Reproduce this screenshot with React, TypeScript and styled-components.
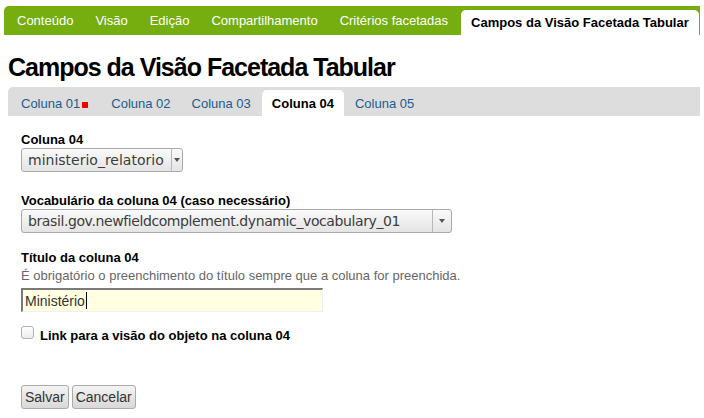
import React from "react";
import styled, { createGlobalStyle } from "styled-components";

const Global = createGlobalStyle`
  html, body { margin: 0; padding: 0; background: #fff; }
  body { font-family: "Liberation Sans", Arial, sans-serif; font-size: 13px; color: #000; }
`;

const Page = styled.div`
  padding: 6px 4px 0 4px;
`;

const Nav = styled.nav`
  display: flex;
  align-items: flex-end;
  height: 29px;
  background: #76ad0f;
  border-radius: 5px 0 0 0;
  padding-left: 4px;
`;

const NavItem = styled.a<{ $active?: boolean }>`
  display: flex;
  align-items: center;
  height: ${(p) => (p.$active ? "25px" : "29px")};
  padding: 0 ${(p) => (p.$active ? "10px" : "9px")};
  margin-right: 4px;
  color: ${(p) => (p.$active ? "#000" : "#fff")};
  background: ${(p) => (p.$active ? "#fff" : "transparent")};
  font-weight: ${(p) => (p.$active ? "bold" : "normal")};
  border-radius: ${(p) => (p.$active ? "5px 5px 0 0" : "0")};
  font-size: 13px;
  text-decoration: none;
  white-space: nowrap;
`;

const Content = styled.div`
  padding: 0 0 0 4px;
`;

const Title = styled.h1`
  margin: 17px 0 0 0;
  font-size: 25px;
  line-height: 30px;
  font-weight: bold;
  letter-spacing: -1px;
`;

const SubTabs = styled.div`
  display: flex;
  align-items: flex-end;
  margin-top: 5px;
  height: 29px;
  background: #dddddd;
  border-radius: 5px 0 0 0;
  padding-left: 3px;
`;

const SubTab = styled.a<{ $active?: boolean }>`
  display: flex;
  align-items: center;
  height: ${(p) => (p.$active ? "26px" : "29px")};
  padding: 0 10px;
  margin-right: 1px;
  padding-top: ${(p) => (p.$active ? "0" : "3px")};
  box-sizing: border-box;
  color: ${(p) => (p.$active ? "#000" : "#205c90")};
  background: ${(p) => (p.$active ? "#fff" : "transparent")};
  font-weight: ${(p) => (p.$active ? "bold" : "normal")};
  border-radius: 5px 5px 0 0;
  font-size: 13px;
  white-space: nowrap;
`;

const RequiredMark = styled.span`
  display: inline-block;
  width: 6px;
  height: 6px;
  background: #ee0000;
  margin: 3px 2px 0 2px;
`;

const Form = styled.form`
  padding: 0 0 0 13px;
  display: flex;
  flex-direction: column;
`;

const Field = styled.div<{ $mt: number }>`
  margin-top: ${(p) => p.$mt}px;
  display: flex;
  flex-direction: column;
  align-items: flex-start;
`;

const Label = styled.label`
  font-weight: bold;
  font-size: 13px;
  line-height: 15px;
`;

const Help = styled.div`
  color: #666;
  font-size: 13px;
  line-height: 15px;
  margin-top: 3px;
`;

const SelectBox = styled.div<{ $w: number }>`
  margin-top: 1px;
  width: ${(p) => p.$w}px;
  height: 24px;
  box-sizing: border-box;
  display: flex;
  align-items: stretch;
  border: 1px solid #a9a9a9;
  border-radius: 3px;
  background: linear-gradient(#fafafa, #e4e4e4);
  font-family: "DejaVu Sans", "Noto Sans", sans-serif;
  font-size: 14px;
  color: #3c3c3c;
  overflow: hidden;
`;

const SelectValue = styled.span<{ $spacing: number }>`
  flex: 1;
  display: flex;
  align-items: center;
  padding-left: 6px;
  white-space: nowrap;
  overflow: hidden;
  letter-spacing: ${(p) => p.$spacing}px;
`;

const SelectArrow = styled.span<{ $w: number }>`
  width: ${(p) => p.$w}px;
  flex: none;
  border-left: 1px solid #b8b8b8;
  display: flex;
  align-items: center;
  justify-content: center;
  &::after {
    content: "";
    border-left: 3px solid transparent;
    border-right: 3px solid transparent;
    border-top: 4px solid #555;
  }
`;

const TextInput = styled.div`
  margin-top: 5px;
  width: 302px;
  height: 24px;
  box-sizing: border-box;
  background: #ffffe1;
  border-top: 2px solid #7a7a7a;
  border-left: 2px solid #7a7a7a;
  border-right: 1px solid #f0f0f0;
  border-bottom: 1px solid #f0f0f0;
  display: flex;
  align-items: center;
  padding-left: 2px;
  font-size: 14px;
  color: #333;
`;

const Caret = styled.span`
  display: inline-block;
  width: 1px;
  height: 17px;
  background: #000;
  margin-left: 1px;
`;

const CheckRow = styled.div`
  margin-top: 14px;
  display: flex;
  align-items: flex-start;
  gap: 6px;
`;

const CheckBox = styled.span`
  width: 13px;
  height: 13px;
  box-sizing: border-box;
  border: 1px solid #b0b0b0;
  border-radius: 3px;
  background: linear-gradient(#fff, #ececec);
`;

const CheckLabel = styled.span`
  font-weight: bold;
  font-size: 13px;
  line-height: 15px;
  margin-top: 2px;
`;

const Buttons = styled.div`
  margin-top: 42px;
  display: flex;
  gap: 3px;
`;

const Button = styled.button`
  height: 24px;
  padding: 0 3px;
  border: 1px solid #aaa;
  border-radius: 3px;
  background: linear-gradient(#f4f4f4, #d8d8d8);
  font-family: "Liberation Sans", Arial, sans-serif;
  font-size: 14px;
  color: #333;
`;

export default function App() {
  const nav = ["Conteúdo", "Visão", "Edição", "Compartilhamento", "Critérios facetadas"];
  const cols = ["Coluna 01", "Coluna 02", "Coluna 03", "Coluna 04", "Coluna 05"];
  return (
    <Page>
      <Global />
      <Nav>
        {nav.map((n) => (
          <NavItem key={n}>{n}</NavItem>
        ))}
        <NavItem $active>Campos da Visão Facetada Tabular</NavItem>
      </Nav>
      <Content>
        <Title>Campos da Visão Facetada Tabular</Title>
        <SubTabs>
          {cols.map((c, i) => (
            <SubTab key={c} $active={i === 3}>
              {c}
              {i === 0 && <RequiredMark />}
            </SubTab>
          ))}
        </SubTabs>
        <Form>
          <Field $mt={16}>
            <Label>Coluna 04</Label>
            <SelectBox $w={162}>
              <SelectValue $spacing={0}>ministerio_relatorio</SelectValue>
              <SelectArrow $w={10} />
            </SelectBox>
          </Field>
          <Field $mt={21}>
            <Label>Vocabulário da coluna 04 (caso necessário)</Label>
            <SelectBox $w={431}>
              <SelectValue $spacing={-0.4}>brasil.gov.newfieldcomplement.dynamic_vocabulary_01</SelectValue>
              <SelectArrow $w={18} />
            </SelectBox>
          </Field>
          <Field $mt={17}>
            <Label>Título da coluna 04</Label>
            <Help>É obrigatório o preenchimento do título sempre que a coluna for preenchida.</Help>
            <TextInput>
              Ministério<Caret />
            </TextInput>
          </Field>
          <CheckRow>
            <CheckBox />
            <CheckLabel>Link para a visão do objeto na coluna 04</CheckLabel>
          </CheckRow>
          <Buttons>
            <Button type="button">Salvar</Button>
            <Button type="button">Cancelar</Button>
          </Buttons>
        </Form>
      </Content>
    </Page>
  );
}
